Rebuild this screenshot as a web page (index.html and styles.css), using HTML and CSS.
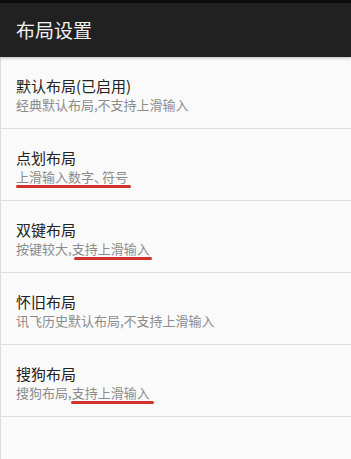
FILE: index.html
```html
<!DOCTYPE html>
<html lang="zh-CN">
<head>
<meta charset="utf-8">
<link rel="stylesheet" href="styles.css">
</head>
<body>
<div class="screen">
  <div class="statusbar"></div>
  <header class="appbar">布局设置</header>
  <ul class="list">
    <li class="item">
      <div class="title">默认布局(已启用)</div>
      <div class="sub">经典默认布局,不支持上滑输入</div>
    </li>
    <li class="item">
      <div class="title">点划布局</div>
      <div class="sub"><span class="mark m1">上滑输入数字<span class="dun">、</span>符号</span></div>
    </li>
    <li class="item">
      <div class="title">双键布局</div>
      <div class="sub">按键较大,<span class="mark m2">支持上滑输入</span></div>
    </li>
    <li class="item">
      <div class="title">怀旧布局</div>
      <div class="sub">讯飞历史默认布局,不支持上滑输入</div>
    </li>
    <li class="item">
      <div class="title">搜狗布局</div>
      <div class="sub">搜狗布局,<span class="mark m3">支持上滑输入</span></div>
    </li>
  </ul>
</div>
</body>
</html>
```

FILE: styles.css
```css
html, body {
  margin: 0;
  padding: 0;
  background: #fafafa;
}
body {
  font-family: "Noto Sans CJK SC", "Noto Sans", sans-serif;
  width: 351px;
  height: 459px;
  overflow: hidden;
}
.screen {
  display: flex;
  flex-direction: column;
  height: 459px;
  border-left: 1px solid #dcdcdc;
  box-sizing: border-box;
  background: #fafafa;
}
.statusbar {
  height: 3px;
  background: #0c0c0c;
  margin-left: -1px;
}
.appbar {
  height: 54px;
  margin-left: -1px;
  background: #212121;
  color: #f2f2f2;
  font-size: 19px;
  line-height: 54px;
  padding-left: 16px;
  box-shadow: 0 1px 3px rgba(0,0,0,0.25);
  position: relative;
  z-index: 1;
}
.list {
  list-style: none;
  margin: 0;
  padding: 0;
}
.item {
  padding: 19px 0 14px 15px;
  border-bottom: 1px solid #dedede;
}
.title {
  font-size: 15px;
  line-height: 20px;
  color: #222;
}
.sub {
  font-size: 13px;
  line-height: 18px;
  color: #8c8c8c;
}
.dun {
  margin-right: -5px;
}
.mark {
  position: relative;
}
.mark::after {
  content: "";
  position: absolute;
  left: 0;
  right: -3px;
  bottom: -2px;
  height: 3px;
  border-radius: 2px;
  background: #d1322c;
}
.m2::after { left: 2px; right: -2px; }
.m3::after { left: -1px; right: -4px; }
```
